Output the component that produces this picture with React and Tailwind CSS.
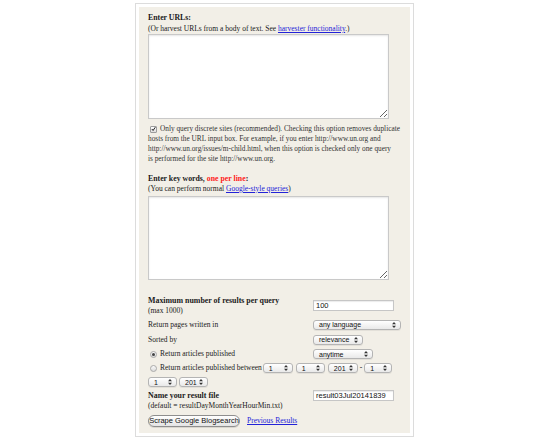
import React from "react";

const serif = { fontFamily: '"Liberation Serif", "Times New Roman", serif' };
const sans = { fontFamily: '"Liberation Sans", Arial, sans-serif' };

function Arrows() {
  return (
    <svg width="4" height="6" viewBox="0 0 4 6" className="shrink-0">
      <path d="M2 0 L4 2.3 L0 2.3 Z" fill="#333" />
      <path d="M2 6 L4 3.7 L0 3.7 Z" fill="#333" />
    </svg>
  );
}

function Sel({ label, cls }) {
  return (
    <div
      style={sans}
      className={`flex shrink-0 items-center justify-between h-[10px] rounded-[3px] border border-[#b4b4b4] bg-gradient-to-b from-white to-[#e9e9e9] pl-[5px] pr-[4px] text-[7px] leading-none text-[#111] shadow-[0_1px_0_rgba(0,0,0,0.06)] ${cls}`}
    >
      <span>{label}</span>
      <Arrows />
    </div>
  );
}

function Input({ value }) {
  return (
    <div
      style={sans}
      className="w-[81px] h-[11px] border border-[#c6c6c6] bg-white pl-[2px] text-[7.5px] leading-[10px] text-[#111] shadow-[inset_0_1px_1px_rgba(0,0,0,0.08)]"
    >
      {value}
    </div>
  );
}

function Radio({ checked }) {
  return (
    <div className="w-[7px] h-[7px] rounded-full border border-[#a9a9a9] bg-gradient-to-b from-[#fafafa] to-[#dcdcdc] flex items-center justify-center shrink-0">
      {checked && <div className="w-[3px] h-[3px] rounded-full bg-[#444]" />}
    </div>
  );
}

export default function App() {
  return (
    <div className="w-[550px] h-[440px] bg-white overflow-hidden">
      <div className="ml-[135px] mt-[3px] w-[279px] h-[434px] border border-[#dcdcdc] bg-white p-[3px]">
        <div
          style={serif}
          className="h-full bg-[#f2efe7] pl-[9px] pt-[5px] text-[7.5px] text-[#1a1a1a]"
        >
          <div className="leading-[11px] font-bold text-[7.8px]">Enter URLs:</div>
          <div className="leading-[11px]">
            (Or harvest URLs from a body of text. See{" "}
            <span className="text-[#2323d8] underline">harvester functionality</span>.)
          </div>
          <textarea className="block w-[241px] h-[85px] border border-[#c9c9c9] bg-white resize shadow-[inset_0_1px_2px_rgba(0,0,0,0.1)]" />

          <div className="mt-[5px] leading-[10px] whitespace-nowrap text-[#333] text-[7.3px]">
            <div className="flex items-center">
              <div className="ml-[2px] mr-[3px] w-[7px] h-[7px] border border-[#9c9c9c] rounded-[1px] bg-gradient-to-b from-white to-[#dedede] flex items-center justify-center">
                <svg width="6" height="6" viewBox="0 0 6 6">
                  <path d="M1 3 L2.5 4.8 L5.2 0.8" stroke="#222" strokeWidth="1.2" fill="none" />
                </svg>
              </div>
              <span>Only query discrete sites (recommended). Checking this option removes duplicate</span>
            </div>
            <div>hosts from the URL input box. For example, if you enter http://www.un.org and</div>
            <div>http://www.un.org/issues/m-child.html, when this option is checked only one query</div>
            <div>is performed for the site http://www.un.org.</div>
          </div>

          <div className="mt-[10px] leading-[10px] font-bold text-[7.8px]">
            Enter key words, <span className="text-[#ff1a1a]">one per line</span>:
          </div>
          <div className="leading-[10px]">
            (You can perform normal{" "}
            <span className="text-[#2323d8] underline">Google-style queries</span>)
          </div>
          <textarea className="block mt-[2px] w-[241px] h-[84px] border border-[#c9c9c9] bg-white resize shadow-[inset_0_1px_2px_rgba(0,0,0,0.1)]" />

          <div className="mt-[16px] grid grid-cols-[165px_1fr]">
            <div className="leading-[10px]">
              <div className="font-bold text-[7.9px]">Maximum number of results per query</div>
              <div>(max 1000)</div>
            </div>
            <div className="pt-[4px]">
              <Input value="100" />
            </div>
          </div>

          <div className="mt-[1px] grid grid-cols-[165px_1fr] h-[15px] items-center">
            <div className="leading-[10px]">Return pages written in</div>
            <Sel label="any language" cls="w-[88px]" />
          </div>
          <div className="grid grid-cols-[165px_1fr] h-[15px] items-center">
            <div className="leading-[10px]">Sorted by</div>
            <Sel label="relevance" cls="w-[50px]" />
          </div>
          <div className="grid grid-cols-[165px_1fr] h-[14px] items-center">
            <div className="flex items-center leading-[10px]">
              <div className="ml-[2px] mr-[3px]">
                <Radio checked />
              </div>
              <span>Return articles published</span>
            </div>
            <Sel label="anytime" cls="w-[60px]" />
          </div>
          <div className="flex h-[14px] items-center whitespace-nowrap">
            <div className="ml-[2px] mr-[3px]">
              <Radio />
            </div>
            <span className="leading-[10px] mr-[1px]">Return articles published between</span>
            <Sel label="1" cls="w-[30px]" />
            <Sel label="1" cls="ml-[3px] w-[29px]" />
            <Sel label="201" cls="ml-[3px] w-[30px]" />
            <span className="mx-[2px] leading-[10px]">-</span>
            <Sel label="1" cls="w-[28px]" />
          </div>
          <div className="flex h-[14px] items-center">
            <Sel label="1" cls="w-[29px]" />
            <Sel label="201" cls="ml-[2px] w-[29px]" />
          </div>

          <div className="mt-[2px] grid grid-cols-[165px_1fr]">
            <div className="leading-[10px]">
              <div className="font-bold text-[7.9px]">Name your result file</div>
              <div>(default = resultDayMonthYearHourMin.txt)</div>
            </div>
            <div className="-mt-[1px]">
              <Input value="result03Jul20141839" />
            </div>
          </div>

          <div className="mt-[4px] flex items-center">
            <div
              style={sans}
              className="h-[12px] w-[92px] rounded-full border border-[#8e8e8e] bg-gradient-to-b from-white to-[#e4e4e4] flex items-center justify-center text-[7.5px] leading-none text-[#111] shadow-[0_1px_0_rgba(0,0,0,0.1)]"
            >
              Scrape Google Blogsearch
            </div>
            <span className="ml-[7px] text-[#2323d8] underline leading-[10px]">Previous Results</span>
          </div>
        </div>
      </div>
    </div>
  );
}
